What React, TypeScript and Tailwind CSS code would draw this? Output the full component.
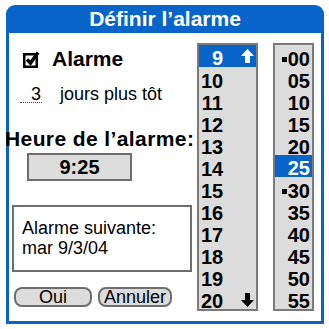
const hours = [9, 10, 11, 12, 13, 14, 15, 16, 17, 18, 19, 20];
const minutes = ["00", "05", "10", "15", "20", "25", "30", "35", "40", "45", "50", "55"];

function UpArrow({ color }: { color: string }) {
  return (
    <svg width="13" height="14" viewBox="0 0 13 14" className="shrink-0">
      <path d="M6.5 0 L13 7 H9 V14 H4 V7 H0 Z" fill={color} />
    </svg>
  );
}

function DownArrow({ color }: { color: string }) {
  return (
    <svg width="13" height="14" viewBox="0 0 13 14" className="shrink-0">
      <path d="M6.5 14 L13 7 H9 V0 H4 V7 H0 Z" fill={color} />
    </svg>
  );
}

function CheckBox() {
  return (
    <svg width="17" height="17" viewBox="0 0 17 17" className="shrink-0">
      <rect x="1.25" y="3.25" width="12.5" height="12.5" fill="none" stroke="#000" strokeWidth="2.5" />
      <path d="M4 8.5 L7.5 12 L15 1.5" fill="none" stroke="#000" strokeWidth="3.5" />
    </svg>
  );
}

export default function App() {
  return (
    <div className="w-[329px] h-[329px] bg-white pt-[5px] pl-[6px] font-['Liberation_Sans',Arial,sans-serif] text-black">
      <div className="w-[318px] h-[319px] bg-[#0864c8] rounded-t-[9px] flex flex-col px-[3px] pb-[3px]">
        <div className="h-[28px] leading-[28px] text-center text-white font-bold text-[21px]">
          Définir l’alarme
        </div>
        <div className="flex-1 bg-white flex">
          {/* left column */}
          <div className="w-[188px] flex flex-col">
            <div className="mt-[15px] h-[22px] flex items-center">
              <div className="ml-[14px] w-[17px] h-[17px] flex">
                <CheckBox />
              </div>
              <span className="ml-[12px] font-bold text-[21px] leading-[22px]">Alarme</span>
            </div>
            <div className="mt-[13px] h-[22px] flex items-start text-[18px] leading-[22px]">
              <span className="ml-[11px] w-[22px] text-right pr-[1px] border-b border-dotted border-[#444] h-[20px]">3</span>
              <span className="ml-[18px]">jours plus tôt</span>
            </div>
            <div className="mt-[23px] h-[22px] -ml-[4px] font-bold text-[21px] leading-[22px] tracking-[0.4px] whitespace-nowrap">
              Heure de l’alarme:
            </div>
            <div className="mt-[3px] ml-[18px] w-[105px] h-[28px] bg-[#dcdcdc] border-2 border-[#6e6e6e] flex items-center justify-center font-bold text-[20px] leading-[24px]">
              9:25
            </div>
            <div className="mt-[24px] ml-[3px] w-[180px] h-[67px] border-2 border-[#6e6e6e] pl-[8px] pt-[11px] text-[18px] leading-[20px]">
              <div>Alarme suivante:</div>
              <div>mar 9/3/04</div>
            </div>
            <div className="mt-[15px] flex">
              <button className="ml-[5px] w-[78px] h-[20px] rounded-[8px] bg-[#dcdcdc] border-2 border-[#6e6e6e] text-[18px] leading-[16px]">
                Oui
              </button>
              <button className="ml-[6px] w-[74px] h-[20px] rounded-[8px] bg-[#dcdcdc] border-2 border-[#6e6e6e] text-[18px] leading-[16px]">
                Annuler
              </button>
            </div>
          </div>

          {/* hour list */}
          <div className="mt-[10px] w-[61px] h-[268px] bg-[#dcdcdc] border-2 border-[#7a7a7a] flex flex-col">
            {hours.map((h, i) => (
              <div
                key={h}
                className={
                  i === 0
                    ? "h-[22px] flex items-start bg-[#0864c8] text-white font-bold text-[20px] leading-[26px]"
                    : "h-[22px] flex items-start font-bold text-[20px] leading-[28px]"
                }
              >
                <span className="ml-[2px] w-[22px] text-right shrink-0">{h}</span>
                {i === 0 && (
                  <span className="ml-[18px] mt-[4px] flex shrink-0">
                    <UpArrow color="#ffffff" />
                  </span>
                )}
                {i === hours.length - 1 && (
                  <span className="ml-[18px] mt-[6px] flex shrink-0">
                    <DownArrow color="#000000" />
                  </span>
                )}
              </div>
            ))}
          </div>

          {/* minute list */}
          <div className="mt-[10px] ml-[15px] w-[41px] h-[268px] bg-[#dcdcdc] border-2 border-[#7a7a7a] flex flex-col">
            {minutes.map((m, i) => (
              <div
                key={m}
                className={
                  i === 5
                    ? "h-[22px] flex items-start justify-end pr-[2px] bg-[#0864c8] text-white font-bold text-[20px] leading-[26px]"
                    : "h-[22px] flex items-start justify-end pr-[2px] font-bold text-[20px] leading-[28px]"
                }
              >
                {(m === "00" || m === "30") && (
                  <span className="mt-[12px] mr-[1px] w-[5px] h-[5px] bg-black shrink-0" />
                )}
                <span>{m}</span>
              </div>
            ))}
          </div>
        </div>
      </div>
    </div>
  );
}
